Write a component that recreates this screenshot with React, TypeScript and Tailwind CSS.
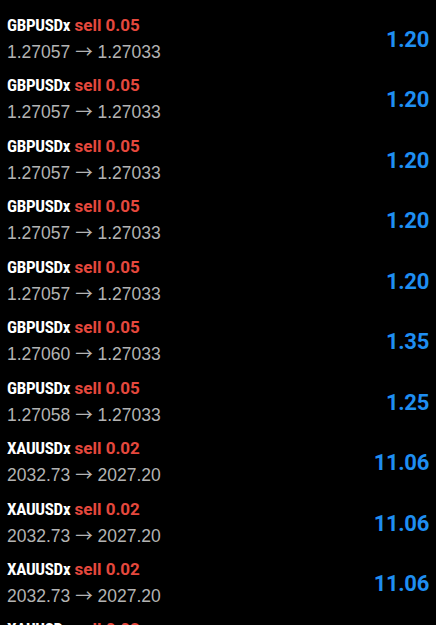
import React from "react";

type Row = { sym: string; lot: string; from: string; to: string; profit: string };

const rows: Row[] = [
  { sym: "GBPUSDx", lot: "0.05", from: "1.27057", to: "1.27033", profit: "1.20" },
  { sym: "GBPUSDx", lot: "0.05", from: "1.27057", to: "1.27033", profit: "1.20" },
  { sym: "GBPUSDx", lot: "0.05", from: "1.27057", to: "1.27033", profit: "1.20" },
  { sym: "GBPUSDx", lot: "0.05", from: "1.27057", to: "1.27033", profit: "1.20" },
  { sym: "GBPUSDx", lot: "0.05", from: "1.27057", to: "1.27033", profit: "1.20" },
  { sym: "GBPUSDx", lot: "0.05", from: "1.27060", to: "1.27033", profit: "1.35" },
  { sym: "GBPUSDx", lot: "0.05", from: "1.27058", to: "1.27033", profit: "1.25" },
  { sym: "XAUUSDx", lot: "0.02", from: "2032.73", to: "2027.20", profit: "11.06" },
  { sym: "XAUUSDx", lot: "0.02", from: "2032.73", to: "2027.20", profit: "11.06" },
  { sym: "XAUUSDx", lot: "0.02", from: "2032.73", to: "2027.20", profit: "11.06" },
  { sym: "XAUUSDx", lot: "0.02", from: "2032.73", to: "2027.20", profit: "11.06" },
];

const rob = { fontFamily: 'Roboto, "Noto Sans", sans-serif' };

export default function App() {
  return (
    <div className="w-[436px] h-[625px] overflow-hidden bg-black">
      <div className="pt-[15px]">
        {rows.map((r, i) => (
          <div key={i} className="h-[60.44px] flex justify-between items-start px-[7px]">
            <div className="flex flex-col">
              <div className="text-[17px] leading-[20px] font-bold" style={rob}>
                <span className="text-white tracking-[-0.3px] font-stretch-[82%]">{r.sym}</span>{" "}
                <span className="text-[#e5483d] font-stretch-[92%]">sell {r.lot}</span>
              </div>
              <div
                className="text-[17.5px] leading-[24px] text-[#b3b3b3] mt-[4px]"
                style={{ fontFamily: '"Liberation Sans", Arial, sans-serif' }}
              >
                {r.from}{" "}
                <span style={{ fontFamily: '"Noto Sans CJK SC", sans-serif' }}>→</span>{" "}
                {r.to}
              </div>
            </div>
            <div className="mt-[11px] text-[22px] leading-[28px] font-bold text-[#1f8ef1] tracking-[-0.3px]" style={rob}>
              {r.profit}
            </div>
          </div>
        ))}
      </div>
    </div>
  );
}
